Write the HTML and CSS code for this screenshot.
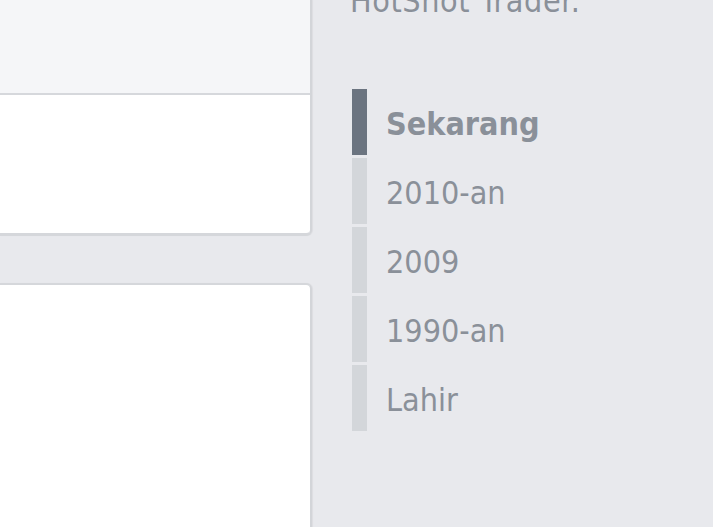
FILE: index.html
```html
<!DOCTYPE html>
<html lang="id">
<head>
<meta charset="utf-8">
<title>Timeline</title>
<link rel="stylesheet" href="styles.css">
</head>
<body>
<div class="page">
  <main class="main">
    <section class="card card-top">
      <div class="card-head"></div>
      <div class="card-body"></div>
    </section>
    <section class="card card-bottom"></section>
  </main>
  <aside class="sidebar">
    <p class="intro">HotShot Trader.</p>
    <ol class="timeline">
      <li class="tl-item active">Sekarang</li>
      <li class="tl-item">2010-an</li>
      <li class="tl-item">2009</li>
      <li class="tl-item">1990-an</li>
      <li class="tl-item">Lahir</li>
    </ol>
  </aside>
</div>
</body>
</html>
```
FILE: styles.css
```css
html, body {
  margin: 0;
  padding: 0;
  background: #e8e9ed;
}
body {
  width: 713px;
  height: 527px;
  overflow: hidden;
  font-family: "DejaVu Sans Condensed", "DejaVu Sans", sans-serif;
}
.page {
  display: flex;
  height: 527px;
}
.main {
  width: 313px;
  flex: none;
  display: flex;
  flex-direction: column;
}
.card {
  width: 310px;
  background: #ffffff;
  border-right: 2px solid #d3d5d9;
  box-shadow: 1px 0 1px rgba(0, 0, 0, 0.05);
}
.card-top {
  border-bottom: 3px solid #d5d7db;
  border-bottom-right-radius: 6px;
}
.card-head {
  height: 93px;
  background: #f5f6f8;
  border-bottom: 2px solid #d6d8dc;
}
.card-body {
  height: 138px;
}
.card-bottom {
  margin-top: 47px;
  border-top: 2px solid #d5d7db;
  border-top-right-radius: 6px;
  flex: 1;
}
.sidebar {
  flex: 1;
  padding-left: 37px;
}
.intro {
  margin: -21px 0 0 0;
  font-size: 32px;
  line-height: 45px;
  letter-spacing: 0.6px;
  color: #8a9099;
}
.timeline {
  list-style: none;
  margin: 65px 0 0 2px;
  padding: 0;
}
.tl-item {
  height: 66px;
  box-sizing: border-box;
  padding-top: 3px;
  margin-bottom: 3px;
  display: flex;
  align-items: center;
  border-left: 15px solid #d3d6da;
  padding-left: 19px;
  font-size: 32px;
  color: #8a9099;
}
.tl-item.active {
  border-left-color: #6b7480;
  font-weight: bold;
}
```
